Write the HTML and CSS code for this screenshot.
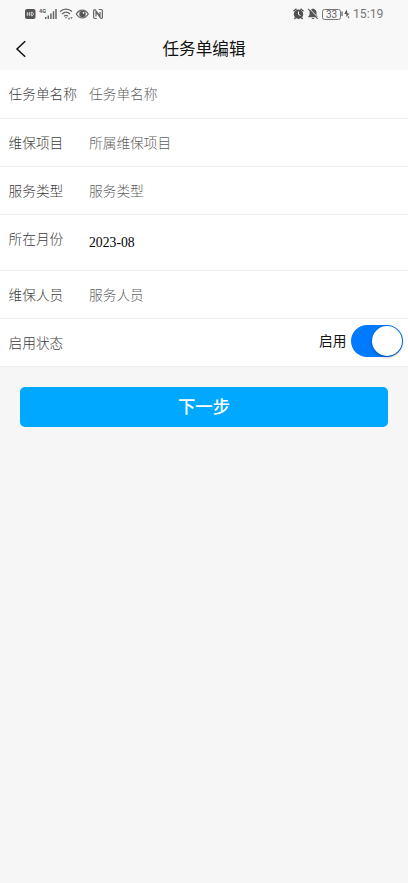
FILE: index.html
```html
<!DOCTYPE html>
<html lang="zh-CN">
<head>
<meta charset="utf-8">
<meta name="viewport" content="width=device-width, initial-scale=1">
<title>任务单编辑</title>
<link rel="stylesheet" href="styles.css">
</head>
<body>
<div class="status">
  <svg class="status-left" width="80" height="14" viewBox="0 0 80 14">
    <rect x="0" y="2" width="10.5" height="10" rx="2" fill="#555"/>
    <path d="M2.3 5v4M4.7 5v4M2.3 7h2.4M6.3 5.2v3.6h.8c1.6 0 1.6-3.6 0-3.6z" fill="none" stroke="#eee" stroke-width=".8"/>
    <text x="14" y="5.500" class="net">4G</text>
    <path d="M20.700 12v-2M23.300 12V8.500M25.900 12V6.500M28.500 12V4.300M31 12V2" stroke="#666" stroke-width="1.500"/>
    <g fill="none" stroke="#666" stroke-width="1.300">
      <path d="M35 4.500c3.500-3.200 8.500-3.200 12 0M37 7c2.500-2.200 5.700-2.200 8 0M39 9.200c1.300-1.100 2.700-1.100 4 0"/>
      <path d="M51.300 7c3.400-5.200 8.600-5.200 12 0-3.400 5.200-8.600 5.200-12 0z"/>
    </g>
    <path d="M39.700 10.200h2.400l-1.200 1.500zM44 10.200l1.200 2h-2.400zM46.500 12.200l-1.200-2h2.400z" fill="#666"/>
    <circle cx="57.500" cy="7" r="3.200" fill="#555"/><circle cx="58.500" cy="5.800" r=".9" fill="#f8f8f8"/>
    <path d="M71.800 11.500h-1.800q-1.400 0-1.400-1.400V3.800q0-1.300 1.400-1.300l5 6.500V5M73.800 2.500h2.200q1.400 0 1.400 1.400v6.300q0 1.300-1.400 1.300l-5-6.500v4.500" fill="none" stroke="#666" stroke-width="1.200"/>
  </svg>
  <div class="status-right">
    <svg width="25" height="14" viewBox="0 0 25 14">
      <circle cx="5.500" cy="7.300" r="4.700" fill="#505050"/>
      <path d="M.5 4.300 3.500 1.800M7.500 1.800l3 2.500M2.500 10.500l-1 1.700M8.500 10.500l1 1.700" stroke="#505050" stroke-width="1.400"/>
      <path d="M5.500 4.500v3l2 1" fill="none" stroke="#f8f8f8"/>
      <path d="M15.300 10.200h9.400v-1l-1.200-1.200V5.500c0-2-1-3-2.400-3.300-.2-1-1.900-1-2.100 0-1.500.3-2.500 1.300-2.500 3.300V8l-1.200 1.200zM18.700 10.900h2.800c-.3 1.500-2.500 1.500-2.800 0z" fill="#555"/>
      <path d="M16.200 1.500l9.500 9.800" stroke="#f8f8f8" stroke-width="1"/>
      <path d="M15.200 1.900l9.500 10" stroke="#555" stroke-width="1.100"/>
    </svg>
    <span class="battery">33</span>
    <svg width="9" height="12" viewBox="0 0 9 12"><path d="M1 3.500v4.500" stroke="#666" stroke-width="1.300"/><path d="M5.600 1.500 3.300 6h2v3L8.500 5.500h-2z" fill="#555"/><path d="M6.500 8.500h2l-1 2z" fill="#555"/></svg>
    <span class="clock">15:19</span>
  </div>
</div>
<header class="nav">
  <svg class="back" width="12" height="18" viewBox="0 0 12 18"><path d="M10.200 1.200 2 9l8.200 7.800" fill="none" stroke="#111" stroke-width="1.500"/></svg>
  <h1>任务单编辑</h1>
</header>
<main>
  <div class="form">
    <div class="row"><span class="label">任务单名称</span><span class="hint">任务单名称</span></div>
    <div class="row"><span class="label">维保项目</span><span class="hint">所属维保项目</span></div>
    <div class="row"><span class="label">服务类型</span><span class="hint">服务类型</span></div>
    <div class="row row-date"><span class="label">所在月份</span><span class="date">2023-08</span></div>
    <div class="row"><span class="label">维保人员</span><span class="hint">服务人员</span></div>
    <div class="row row-state"><span class="label">启用状态</span><span class="state">启用</span><span class="switch"><i class="knob"></i></span></div>
  </div>
  <button class="next">下一步</button>
</main>
</body>
</html>
```
FILE: styles.css
```css
* { box-sizing: border-box; }
body {
  margin: 0;
  min-height: 883px;
  background: #f6f6f6;
  font-family: "Noto Sans CJK SC", sans-serif;
  font-weight: 300;
  overflow: hidden;
}
.status {
  height: 28px;
  padding: 0 25px;
  display: flex;
  align-items: center;
  justify-content: space-between;
  background: #f8f8f8;
}
.net { font: 700 5.500px "Roboto", sans-serif; fill: #555; }
.status-right { display: flex; align-items: center; margin-left: auto; }
.battery {
  width: 19px;
  height: 11px;
  margin: 0 0 0 4px;
  border: 1px solid #777;
  border-radius: 2.500px;
  font: 400 10px/9.500px "Roboto", sans-serif;
  text-align: center;
  color: #666;
}
.clock {
  width: 30px;
  margin-left: 3px;
  font: 400 12.200px/14px "Roboto", sans-serif;
  color: #777;
  white-space: nowrap;
}
.nav {
  height: 42px;
  padding: 0 15px;
  display: grid;
  grid-template-columns: 12px 1fr 12px;
  align-items: center;
  background: #f8f8f8;
}
.nav h1 {
  margin: -2px 0 0;
  font-size: 16.600px;
  line-height: 24px;
  font-weight: 400;
  text-align: center;
  color: #111;
}
.form { background: #fff; }
.row {
  height: 48px;
  padding: 0 0 2px 8.500px;
  display: flex;
  align-items: center;
  border-bottom: 1px solid #eee;
  font-size: 13.700px;
  line-height: 20px;
}
.row:first-child { height: 49px; }
.label { width: 80.500px; color: #3c3c3c; }
.hint { color: #606060; }
.row-date { height: 56px; align-items: flex-start; padding-top: 13px; }
.date {
  padding-top: 5px;
  font: 400 13.700px/20px "Liberation Serif", serif;
  color: #000;
}
.row-state { padding: 0 5px 0 8.500px; }
.row-state .label { margin-top: -1px; }
.state { margin-left: auto; margin-right: 4.500px; margin-top: -5px; color: #111; font-weight: 400; }
.switch {
  width: 52px;
  height: 32px;
  margin-top: -4px;
  display: flex;
  justify-content: flex-end;
  padding: 1px;
  border-radius: 16px;
  background: #007aff;
}
.knob {
  width: 30px;
  height: 30px;
  border-radius: 50%;
  background: #fff;
  box-shadow: 0 1px 3px rgba(0, 0, 0, .4);
}
.next {
  display: block;
  width: 368px;
  height: 40px;
  margin: 20px auto 0;
  padding: 0 0 2px;
  border: 0;
  border-radius: 5px;
  background: #00a9ff;
  color: #fff;
  font: 500 17.400px/38px "Noto Sans CJK SC", sans-serif;
}
```
